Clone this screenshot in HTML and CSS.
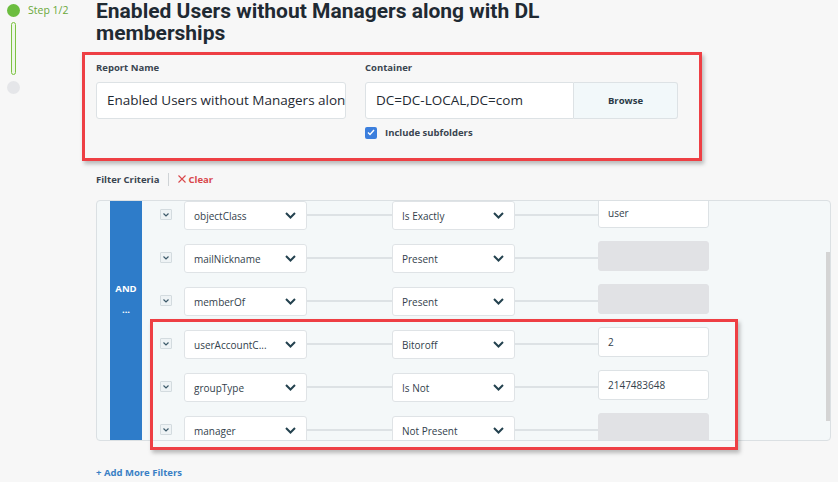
FILE: index.html
```html
<!DOCTYPE html>
<html>
<head>
<meta charset="utf-8">
<link rel="stylesheet" href="styles.css">
</head>
<body>
<div class="page">
  <div class="steps">
    <div class="step-row"><span class="dot-green"></span><span class="step-text">Step 1/2</span></div>
    <div class="step-bar"></div>
    <div class="dot-grey"></div>
  </div>
  <div class="main">
    <h1 class="title">Enabled Users without Managers along with DL memberships</h1>
    <div class="form-box">
      <div class="field report">
        <div class="label">Report Name</div>
        <div class="text-input">Enabled Users without Managers along</div>
      </div>
      <div class="field container">
        <div class="label">Container</div>
        <div class="input-group">
          <div class="text-input cont">DC=DC-LOCAL,DC=com</div>
          <div class="browse">Browse</div>
        </div>
        <div class="check-row">
          <span class="checkbox"><svg width="8" height="7" viewBox="0 0 8 7"><path d="M1 3.5 L3 5.5 L7 1" fill="none" stroke="#fff" stroke-width="1.4"/></svg></span>
          <span class="check-label">Include subfolders</span>
        </div>
      </div>
    </div>
    <div class="filter-head">
      <span class="fh-label">Filter Criteria</span>
      <span class="fh-sep"></span>
      <span class="fh-clear"><svg width="8" height="8" viewBox="0 0 8 8"><path d="M0.5 0.5 L7.5 7.5 M7.5 0.5 L0.5 7.5" stroke="#d9474b" stroke-width="1.1"/></svg>Clear</span>
    </div>
    <div class="panel-wrap">
      <div class="panel">
        <div class="and-col"><div class="and-text">AND</div><div class="and-dots">...</div></div>
        <div class="rows">
          <div class="row">
            <span class="mini"><svg width="6" height="4" viewBox="0 0 6 4"><path d="M0.5 0.5 L3 3 L5.5 0.5" fill="none" stroke="#3d5a6a" stroke-width="1.2"/></svg></span>
            <div class="select attr">objectClass<svg class="chev" width="11" height="7" viewBox="0 0 11 7"><path d="M1 1 L5.5 5.5 L10 1" fill="none" stroke="#24424f" stroke-width="2"/></svg></div>
            <span class="line l1"></span>
            <div class="select op">Is Exactly<svg class="chev" width="11" height="7" viewBox="0 0 11 7"><path d="M1 1 L5.5 5.5 L10 1" fill="none" stroke="#24424f" stroke-width="2"/></svg></div>
            <span class="line l2"></span>
            <div class="value">user</div>
          </div>
          <div class="row">
            <span class="mini"><svg width="6" height="4" viewBox="0 0 6 4"><path d="M0.5 0.5 L3 3 L5.5 0.5" fill="none" stroke="#3d5a6a" stroke-width="1.2"/></svg></span>
            <div class="select attr">mailNickname<svg class="chev" width="11" height="7" viewBox="0 0 11 7"><path d="M1 1 L5.5 5.5 L10 1" fill="none" stroke="#24424f" stroke-width="2"/></svg></div>
            <span class="line l1"></span>
            <div class="select op">Present<svg class="chev" width="11" height="7" viewBox="0 0 11 7"><path d="M1 1 L5.5 5.5 L10 1" fill="none" stroke="#24424f" stroke-width="2"/></svg></div>
            <span class="line l2"></span>
            <div class="value empty"></div>
          </div>
          <div class="row">
            <span class="mini"><svg width="6" height="4" viewBox="0 0 6 4"><path d="M0.5 0.5 L3 3 L5.5 0.5" fill="none" stroke="#3d5a6a" stroke-width="1.2"/></svg></span>
            <div class="select attr">memberOf<svg class="chev" width="11" height="7" viewBox="0 0 11 7"><path d="M1 1 L5.5 5.5 L10 1" fill="none" stroke="#24424f" stroke-width="2"/></svg></div>
            <span class="line l1"></span>
            <div class="select op">Present<svg class="chev" width="11" height="7" viewBox="0 0 11 7"><path d="M1 1 L5.5 5.5 L10 1" fill="none" stroke="#24424f" stroke-width="2"/></svg></div>
            <span class="line l2"></span>
            <div class="value empty"></div>
          </div>
          <div class="row">
            <span class="mini"><svg width="6" height="4" viewBox="0 0 6 4"><path d="M0.5 0.5 L3 3 L5.5 0.5" fill="none" stroke="#3d5a6a" stroke-width="1.2"/></svg></span>
            <div class="select attr">userAccountC...<svg class="chev" width="11" height="7" viewBox="0 0 11 7"><path d="M1 1 L5.5 5.5 L10 1" fill="none" stroke="#24424f" stroke-width="2"/></svg></div>
            <span class="line l1"></span>
            <div class="select op">Bitoroff<svg class="chev" width="11" height="7" viewBox="0 0 11 7"><path d="M1 1 L5.5 5.5 L10 1" fill="none" stroke="#24424f" stroke-width="2"/></svg></div>
            <span class="line l2"></span>
            <div class="value">2</div>
          </div>
          <div class="row">
            <span class="mini"><svg width="6" height="4" viewBox="0 0 6 4"><path d="M0.5 0.5 L3 3 L5.5 0.5" fill="none" stroke="#3d5a6a" stroke-width="1.2"/></svg></span>
            <div class="select attr">groupType<svg class="chev" width="11" height="7" viewBox="0 0 11 7"><path d="M1 1 L5.5 5.5 L10 1" fill="none" stroke="#24424f" stroke-width="2"/></svg></div>
            <span class="line l1"></span>
            <div class="select op">Is Not<svg class="chev" width="11" height="7" viewBox="0 0 11 7"><path d="M1 1 L5.5 5.5 L10 1" fill="none" stroke="#24424f" stroke-width="2"/></svg></div>
            <span class="line l2"></span>
            <div class="value">2147483648</div>
          </div>
          <div class="row">
            <span class="mini"><svg width="6" height="4" viewBox="0 0 6 4"><path d="M0.5 0.5 L3 3 L5.5 0.5" fill="none" stroke="#3d5a6a" stroke-width="1.2"/></svg></span>
            <div class="select attr">manager<svg class="chev" width="11" height="7" viewBox="0 0 11 7"><path d="M1 1 L5.5 5.5 L10 1" fill="none" stroke="#24424f" stroke-width="2"/></svg></div>
            <span class="line l1"></span>
            <div class="select op">Not Present<svg class="chev" width="11" height="7" viewBox="0 0 11 7"><path d="M1 1 L5.5 5.5 L10 1" fill="none" stroke="#24424f" stroke-width="2"/></svg></div>
            <span class="line l2"></span>
            <div class="value empty"></div>
          </div>
        </div>
        <div class="scroll-thumb"></div>
      </div>
      <div class="highlight"></div>
    </div>
    <div class="add-more">+ Add More Filters</div>
  </div>
</div>
</body>
</html>
```

FILE: styles.css
```css
* { box-sizing: border-box; }
html, body { margin: 0; padding: 0; }
body {
  background: #f7f7f7;
  font-family: "Open Sans", "Noto Sans", sans-serif;
  color: #2f3d48;
  width: 838px;
  height: 482px;
  overflow: hidden;
}
.page { display: flex; }
.steps {
  width: 96px;
  flex: none;
  padding: 4px 0 0 7px;
}
.step-row { display: flex; align-items: center; gap: 8px; height: 13px; }
.dot-green { width: 13px; height: 13px; border-radius: 50%; background: #6cbd3f; flex: none; }
.step-text { font-size: 10.5px; color: #6aa83a; line-height: 13px; }
.step-bar {
  margin: 5px 0 0 4px;
  width: 5px;
  height: 53px;
  border: 1.5px solid #7cc242;
  border-radius: 3px;
  background: #eef6e8;
}
.dot-grey { margin-top: 6px; width: 13px; height: 13px; border-radius: 50%; background: #e5e6e9; }

.main { width: 735px; flex: none; }
.title {
  margin: 0 0 8px;
  font-family: Roboto, "Open Sans", sans-serif;
  font-size: 21px;
  line-height: 22px;
  font-weight: 700;
  color: #1f2a33;
  width: 550px;
}
.form-box {
  margin-left: -14px;
  width: 620px;
  height: 109px;
  border: 3px solid #ee3f44;
  box-shadow: 2px 3px 4px rgba(0,0,0,0.25);
  padding: 6px 0 0 11px;
  display: flex;
  gap: 19px;
}
.label { font-size: 9.5px; font-weight: 700; color: #3a4550; line-height: 14px; height: 14px; }
.field.report { width: 250px; }
.text-input {
  margin-top: 7px;
  height: 37px;
  background: #fff;
  border: 1px solid #dde2e5;
  border-radius: 3px;
  font-size: 13.5px;
  line-height: 35px;
  padding-left: 10px;
  color: #1f2a33;
  white-space: nowrap;
  overflow: hidden;
}
.input-group { display: flex; margin-top: 7px; }
.text-input.cont { margin-top: 0; width: 209px; border-radius: 3px 0 0 3px; }
.browse {
  width: 104px;
  height: 37px;
  background: #f2f8fa;
  border: 1px solid #dde2e5;
  border-left: none;
  border-radius: 0 3px 3px 0;
  font-size: 9.5px;
  font-weight: 700;
  color: #2b3a46;
  display: flex;
  align-items: center;
  justify-content: center;
}
.check-row { display: flex; align-items: center; gap: 8px; margin-top: 7px; }
.checkbox {
  width: 12px; height: 12px; border-radius: 2px; background: #3c7fdd;
  display: flex; align-items: center; justify-content: center;
}
.check-label { font-size: 9.5px; font-weight: 700; color: #3a4550; }

.filter-head { display: flex; align-items: center; margin-top: 11px; height: 14px; }
.fh-label { font-size: 9.5px; font-weight: 700; color: #3a4550; }
.fh-sep { width: 1px; height: 13px; background: #cfd3d6; margin: 0 9px 0 8px; }
.fh-clear { font-size: 9.5px; font-weight: 700; color: #d9474b; display: flex; align-items: center; gap: 3px; }

.panel-wrap { position: relative; margin-top: 14px; }
.panel {
  position: relative;
  height: 241px;
  border: 1px solid #dbe0e3;
  border-radius: 4px;
  background: #f4f8f9;
  display: flex;
  overflow: hidden;
}
.and-col {
  margin-left: 13px;
  width: 32px;
  flex: none;
  background: #2e7cc9;
  color: #fff;
  font-weight: 700;
  font-size: 9.5px;
  text-align: center;
  padding-top: 81px;
}
.and-text { line-height: 14px; }
.and-dots { line-height: 14px; margin-top: 7px; }
.rows { margin-top: -3px; margin-left: 18px; }
.row { display: flex; align-items: flex-start; height: 43px; }
.mini {
  margin-top: 11px;
  width: 12px; height: 11px;
  background: #eef3f5;
  border: 1px solid #d3dbdf;
  border-radius: 1px;
  display: flex; align-items: center; justify-content: center;
  flex: none;
}
.select {
  margin-top: 3px;
  height: 29px;
  background: #fff;
  border: 1px solid #dfe3e6;
  border-radius: 3px;
  font-size: 10px;
  color: #33414c;
  padding: 0 10px 0 9px;
  display: flex;
  align-items: center;
  justify-content: space-between;
  flex: none;
  width: 123px;
}
.select.attr { margin-left: 12px; }
.line { margin-top: 16px; height: 2px; background: #dde2e5; flex: none; }
.line.l1 { width: 85px; }
.line.l2 { width: 83px; }
.value {
  width: 111px;
  height: 30px;
  background: #fff;
  border: 1px solid #dde2e5;
  border-radius: 3px;
  font-size: 10px;
  color: #33414c;
  padding-left: 9px;
  line-height: 28px;
  flex: none;
}
.value.empty { background: #e1e2e5; border-color: #e1e2e5; }
.scroll-thumb {
  position: absolute;
  right: 0;
  top: 51px;
  width: 4px;
  height: 169px;
  background: #d4d4d4;
}
.highlight {
  position: absolute;
  left: 54px;
  top: 119px;
  width: 588px;
  height: 131px;
  border: 3px solid #ee3f44;
  box-shadow: 2px 3px 4px rgba(0,0,0,0.25);
}
.add-more {
  margin-top: 25px;
  font-size: 9.5px;
  font-weight: 700;
  color: #3a80c5;
}
```
